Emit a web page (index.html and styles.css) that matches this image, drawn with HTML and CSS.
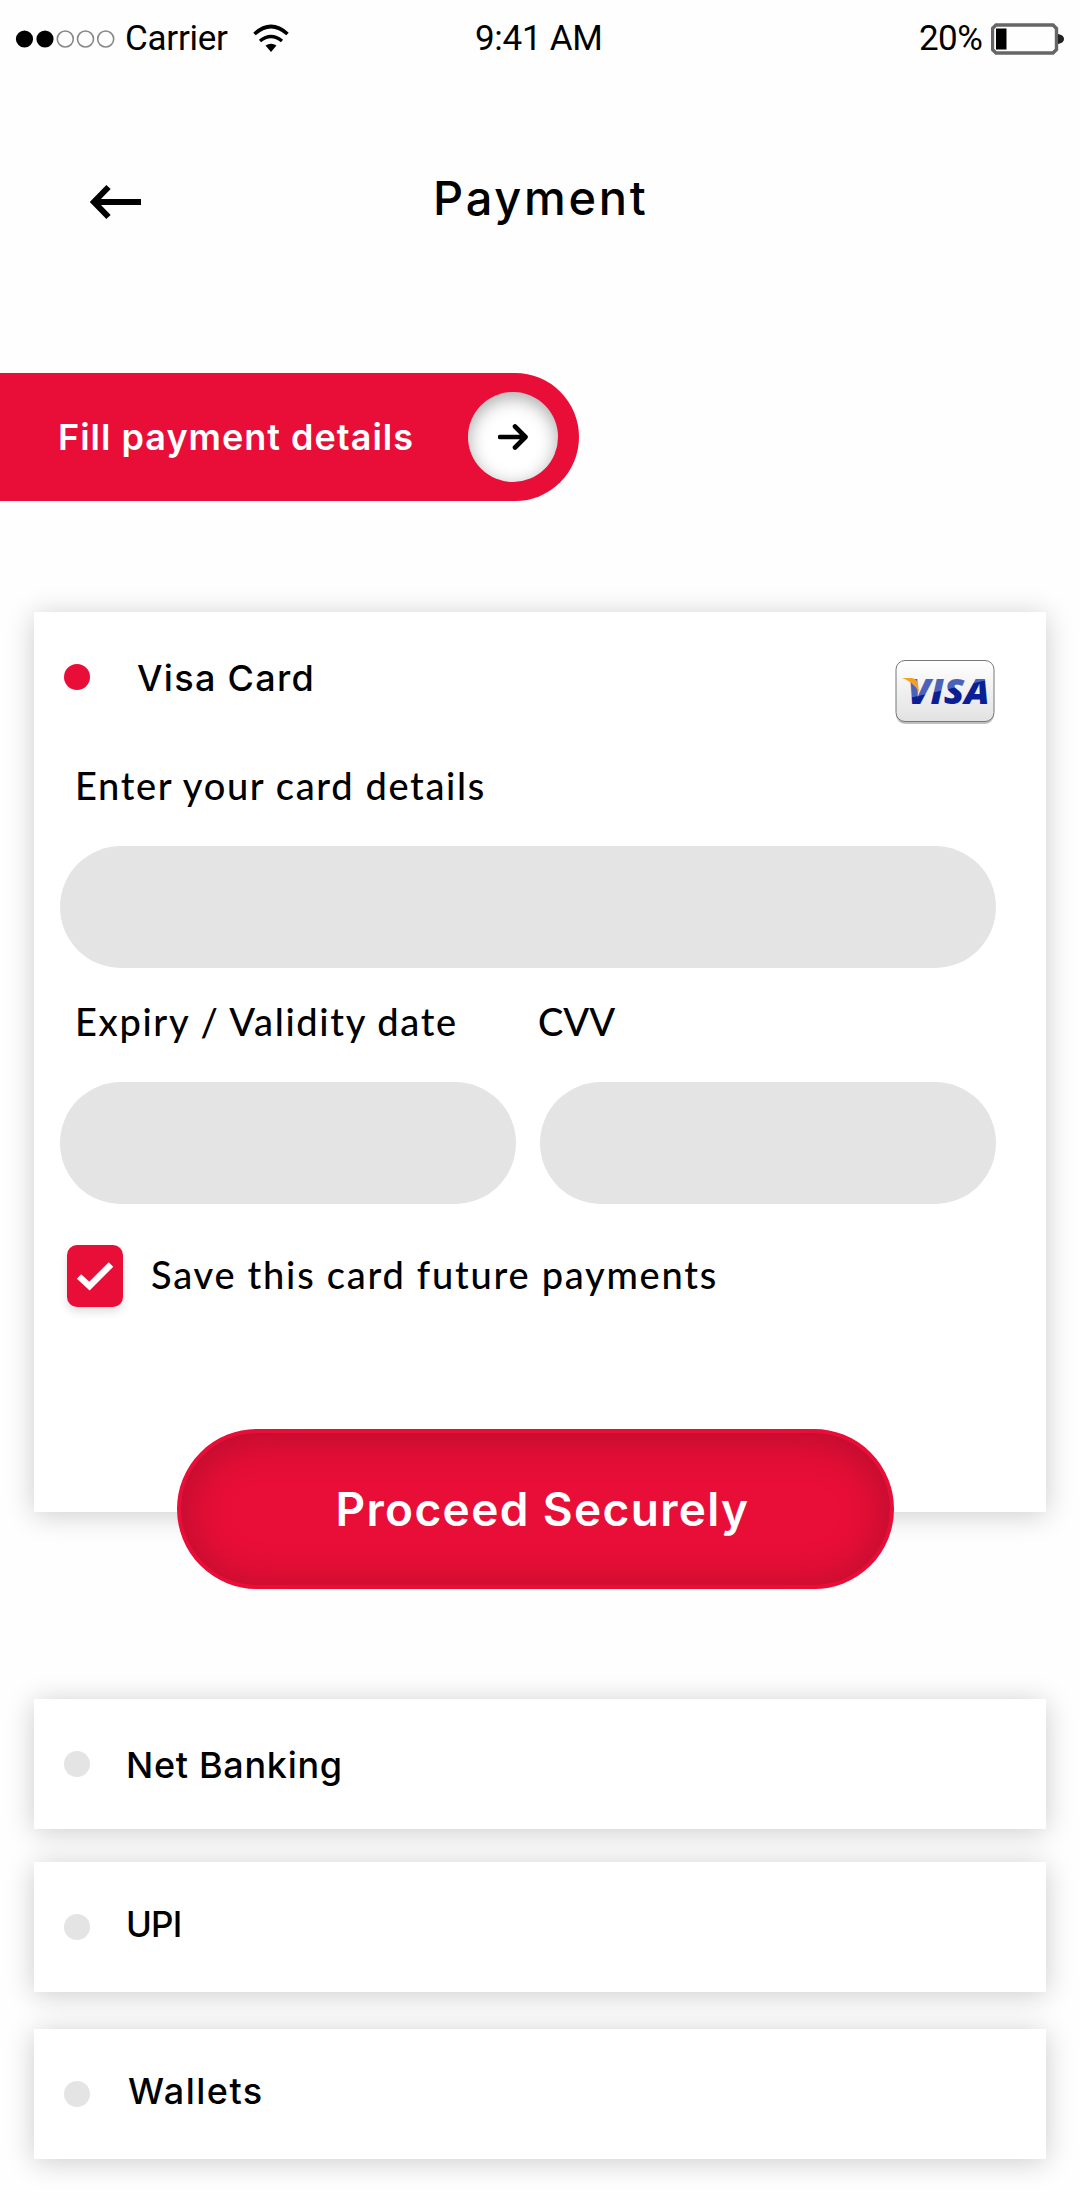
FILE: index.html
```html
<!DOCTYPE html>
<html lang="en">
<head>
<meta charset="utf-8">
<title>Payment</title>
<link rel="stylesheet" href="styles.css">
</head>
<body>
<div class="screen">
  <div class="status">
    <div class="status-left">
      <svg class="signal" width="104" height="20" viewBox="0 0 104 20">
        <circle cx="9.5" cy="10" r="8.6"/><circle cx="30" cy="10" r="8.6"/>
        <g fill="none" stroke="#888" stroke-width="1.6"><circle cx="50.3" cy="10" r="8"/><circle cx="70.5" cy="10" r="8"/><circle cx="90.7" cy="10" r="8"/></g>
      </svg>
      <span class="carrier">Carrier</span>
      <svg class="wifi" width="36" height="30" viewBox="0 0 36 30">
        <path d="M1.500 11Q18-4 34.500 11" fill="none" stroke="#000" stroke-width="3.600"/><path d="M7 18Q18 9 29 18" fill="none" stroke="#000" stroke-width="3.400"/>
        <path d="M12.500 22.500Q18 19 23.500 22.500L18 29Z"/>
      </svg>
    </div>
    <span class="time">9:41 AM</span>
    <div class="status-right">
      <span class="percent">20%</span>
      <svg width="74" height="32" viewBox="0 0 74 32">
        <path d="M5 2H62L65.500 5.500V26.500L62 30H5L1.500 26.500V5.500Z" fill="none" stroke="#666" stroke-width="3.400"/>
        <rect x="5" y="5.500" width="10.500" height="21"/>
        <path d="M67 11Q73 12 73 16T67 21Z" fill="#222"/>
      </svg>
    </div>
  </div>

  <header class="header">
    <svg class="back" width="52" height="36" viewBox="0 0 52 36"><path d="M51 18H4M18.500 3L4 18L18.500 33" fill="none" stroke="#000" stroke-width="6"/></svg>
    <h1 class="title">Payment</h1>
  </header>

  <div class="banner">
    <span class="banner-text">Fill payment details</span>
    <div class="banner-go">
      <svg width="30" height="26" viewBox="0 0 30 26"><path d="M2 13H27M17 2.500L27.500 13L17 23.500" fill="none" stroke="#000" stroke-width="4.600" stroke-linecap="round" stroke-linejoin="round"/></svg>
    </div>
  </div>

  <section class="card">
    <div class="card-head">
      <span class="dot dot-on"></span>
      <span class="option visa-label">Visa Card</span>
      <svg class="visa" width="102" height="68" viewBox="0 0 102 68">
        <defs>
          <linearGradient id="plate" x1="0" y1="0" x2="0" y2="1"><stop offset="0" stop-color="#fff"/><stop offset="1" stop-color="#e2e2e2"/></linearGradient>
          <linearGradient id="ink" gradientUnits="userSpaceOnUse" x1="42" y1="19" x2="48" y2="45"><stop offset=".49" stop-color="#4a63b8"/><stop offset=".52" stop-color="#0a1f94"/></linearGradient>
        </defs>
        <rect x="2" y="3.500" width="98" height="61.500" rx="9" fill="#000" opacity=".25"/>
        <rect x="2" y="1.500" width="98" height="61" rx="9" fill="url(#plate)" stroke="#777"/>
        <text class="visa-text" x="13.500" y="45" textLength="82" lengthAdjust="spacingAndGlyphs" fill="url(#ink)">VISA</text>
        <path d="M8 19H18Q23 20 24 25L25 33Q19 22.500 8 19Z" fill="#f5a01f"/>
      </svg>
    </div>
    <label class="label label-number">Enter your card details</label>
    <div class="field"></div>
    <div class="pair">
      <div><label class="label label-expiry">Expiry / Validity date</label><div class="field"></div></div>
      <div><label class="label label-cvv">CVV</label><div class="field"></div></div>
    </div>
    <div class="save">
      <span class="check"><svg width="38" height="30" viewBox="0 0 38 30"><path d="M3 15.500L13.500 25L35 3.500" fill="none" stroke="#fff" stroke-width="6.400"/></svg></span>
      <span class="label save-text">Save this card future payments</span>
    </div>
  </section>

  <button class="proceed"><span>Proceed Securely</span></button>

  <div class="methods">
    <div class="method"><span class="dot"></span><span class="option net">Net Banking</span></div>
    <div class="method method-upi"><span class="dot"></span><span class="option upi">UPI</span></div>
    <div class="method method-wallets"><span class="dot"></span><span class="option wallets">Wallets</span></div>
  </div>
</div>
</body>
</html>
```
FILE: styles.css
```css
* { box-sizing: border-box; }
body { margin: 0; background: #fefefe; color: #000; font-family: Inter, sans-serif; }
svg { display: block; flex: none; }
span, label { white-space: nowrap; }

.screen { width: 1080px; height: 2200px; overflow: hidden; }

.status { display: grid; grid-template-columns: 475px 1fr 161px; height: 78px; align-items: center; font: 35px/78px Roboto, sans-serif; }
.status-left, .status-right { display: flex; align-items: center; }
.signal { margin-left: 15px; }
.carrier { width: 134px; padding-left: 6px; letter-spacing: -0.25px; }
.wifi { margin-bottom: 3px; }
.time { letter-spacing: -0.3px; }
.percent { width: 72px; letter-spacing: -0.6px; }

.header { display: flex; align-items: center; height: 294px; padding: 0 0 46px 90px; }
.title { margin: 0 0 9px 291px; font-size: 47px; font-weight: 500; line-height: 60px; letter-spacing: 2.7px; }

.banner { display: flex; align-items: center; width: 579px; height: 128px; margin-top: 1px; border-radius: 0 64px 64px 0; background: #e80e37; color: #fff; }
.banner-text { width: 468px; padding-left: 58px; font-size: 36px; font-weight: 600; letter-spacing: 1px; }
.banner-go { display: flex; align-items: center; justify-content: center; width: 90px; height: 90px; border-radius: 50%; background: #fff; box-shadow: inset 0 5px 18px rgba(0, 0, 0, .34); }

.card { width: 1012px; height: 900px; margin: 111px 0 0 34px; padding: 0 50px 0 26px; background: #fff; box-shadow: 0 3px 27px rgba(0, 0, 0, .2); }
.card-head { display: flex; align-items: center; height: 130px; }
.dot { flex: none; width: 26px; height: 26px; margin-left: 4px; border-radius: 50%; background: #e4e4e4; }
.dot-on { background: #e80e37; }
.option { font-size: 36px; font-weight: 500; line-height: 50px; }
.visa-label { margin: 2px 0 0 47px; letter-spacing: 1.3px; }
.visa { margin: 32px 0 0 auto; }
.visa-text { font: italic 800 36px "Open Sans", sans-serif; }

.label { display: block; font: 500 38px/48px Lato, sans-serif; }
.label-number { margin: 19px 0 0 15px; padding-bottom: 37px; letter-spacing: 1.65px; }
.field { height: 122px; border-radius: 61px; background: #e4e4e4; }
.pair { display: grid; grid-template-columns: 1fr 1fr; gap: 24px; margin-top: 29px; }
.label-expiry, .label-cvv { padding-bottom: 37px; }
.label-expiry { margin-left: 15px; letter-spacing: 1.65px; }
.label-cvv { margin-left: -2px; letter-spacing: 0; }
.save { display: flex; align-items: center; height: 62px; margin: 41px 0 0 7px; }
.check { display: flex; align-items: center; justify-content: center; width: 56px; height: 62px; border-radius: 10px; background: #e80e37; box-shadow: 0 5px 8px rgba(0, 0, 0, .12); }
.save-text { margin: -5px 0 0 28px; letter-spacing: 1.75px; }

.proceed { display: flex; position: relative; align-items: center; justify-content: center; width: 717px; height: 160px; margin: -83px 0 0 177px; padding: 0 0 0 14px; border: 4px solid #e80e37; border-radius: 80px; background: #e80e37; box-shadow: inset 0 4px 42px rgba(75, 15, 25, .34); color: #fff; font: 600 46px/60px Inter, sans-serif; letter-spacing: 1.35px; }

.methods { padding: 110px 34px 0; }
.method { display: flex; align-items: center; height: 130px; padding-left: 26px; background: #fff; box-shadow: 0 3px 27px rgba(0, 0, 0, .2); }
.method .option { margin: 2px 0 0 36px; }
.method .net { letter-spacing: 0.7px; }
.method .upi { margin-top: -6px; font-size: 35px; letter-spacing: -0.8px; }
.method .wallets { margin: -6px 0 0 38px; letter-spacing: 1.5px; }
.method-upi { margin-top: 33px; }
.method-wallets { margin-top: 37px; }
```
